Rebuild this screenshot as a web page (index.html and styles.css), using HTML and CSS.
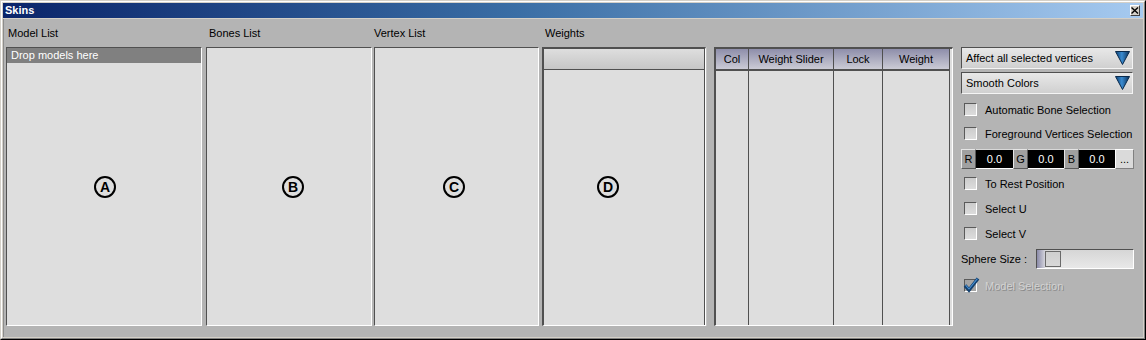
FILE: index.html
```html
<!DOCTYPE html>
<html>
<head>
<meta charset="utf-8">
<title>Skins</title>
<link rel="stylesheet" href="styles.css">
</head>
<body>
<div class="win">
  <div class="frame">
    <div class="titlebar">
      <span class="title">Skins</span>
      <span class="close"><svg width="8" height="7" viewBox="0 0 8 7"><path d="M0.5 0.5 L7 6.5 M7 0.5 L0.5 6.5" stroke="#000" stroke-width="1.4" fill="none"/></svg></span>
    </div>
    <div class="main">
      <div class="col col-a">
        <div class="lbl lbl-a">Model List</div>
        <div class="panel">
          <div class="drop">Drop models here</div>
          <span class="mark mark-a">A</span>
        </div>
      </div>
      <div class="col col-b">
        <div class="lbl lbl-b">Bones List</div>
        <div class="panel">
          <span class="mark mark-b">B</span>
        </div>
      </div>
      <div class="col col-c">
        <div class="lbl lbl-c">Vertex List</div>
        <div class="panel">
          <span class="mark mark-c">C</span>
        </div>
      </div>
      <div class="col col-w">
        <div class="lbl lbl-w">Weights</div>
        <div class="wrow">
          <div class="panel panel-d">
            <div class="dhead"></div>
            <span class="mark mark-d">D</span>
          </div>
          <div class="splitter"></div>
          <div class="table">
            <div class="tcol tc-col"><div class="th">Col</div><div class="td"></div></div>
            <div class="tcol tc-slider"><div class="th">Weight Slider</div><div class="td"></div></div>
            <div class="tcol tc-lock"><div class="th">Lock</div><div class="td"></div></div>
            <div class="tcol tc-weight"><div class="th">Weight</div><div class="td"></div></div>
            <div class="tfill"></div>
          </div>
        </div>
      </div>
      <div class="side">
        <div class="dd dd1"><span>Affect all selected vertices</span>
          <svg class="arrow" width="15" height="14" viewBox="0 0 15 14"><defs><linearGradient id="ag" x1="0" y1="0" x2="1" y2="0"><stop offset="0" stop-color="#0c3f72"/><stop offset="0.45" stop-color="#3a8bd0"/><stop offset="1" stop-color="#0a2f58"/></linearGradient></defs><polygon points="0.5,0.5 14.5,0.5 7.5,13.5" fill="url(#ag)" stroke="#0a2a4c" stroke-width="1"/></svg>
        </div>
        <div class="dd dd2"><span>Smooth Colors</span>
          <svg class="arrow" width="15" height="14" viewBox="0 0 15 14"><defs><linearGradient id="ag2" x1="0" y1="0" x2="1" y2="0"><stop offset="0" stop-color="#0c3f72"/><stop offset="0.45" stop-color="#3a8bd0"/><stop offset="1" stop-color="#0a2f58"/></linearGradient></defs><polygon points="0.5,0.5 14.5,0.5 7.5,13.5" fill="url(#ag2)" stroke="#0a2a4c" stroke-width="1"/></svg>
        </div>
        <div class="cbrow cb1"><span class="cb"></span><span class="cbl">Automatic Bone Selection</span></div>
        <div class="cbrow cb2"><span class="cb"></span><span class="cbl">Foreground Vertices Selection</span></div>
        <div class="rgb">
          <span class="ch ch-r">R</span><span class="val v1">0.0</span>
          <span class="ch ch-g">G</span><span class="val v2">0.0</span>
          <span class="ch ch-b">B</span><span class="val v3">0.0</span>
          <span class="more">...</span>
        </div>
        <div class="cbrow cb3"><span class="cb"></span><span class="cbl">To Rest Position</span></div>
        <div class="cbrow cb4"><span class="cb"></span><span class="cbl">Select U</span></div>
        <div class="cbrow cb5"><span class="cb"></span><span class="cbl">Select V</span></div>
        <div class="sphere">
          <span class="sph-lbl">Sphere Size :</span>
          <div class="slider"><div class="sfill"></div><div class="thumb"></div></div>
        </div>
        <div class="cbrow cb6">
          <span class="cb cb-dis">
            <svg class="check" width="17" height="16" viewBox="0 0 17 16"><path d="M2 8.5 L6 13 L15 1.5" stroke="#123f6e" stroke-width="3.4" fill="none" stroke-linejoin="miter"/><path d="M2.6 8.2 L6 12 L14.4 1.6" stroke="#4a92d4" stroke-width="1.1" fill="none"/></svg>
          </span>
          <span class="cbl dis">Model Selection</span>
        </div>
      </div>
    </div>
  </div>
</div>
</body>
</html>
```

FILE: styles.css
```css
* { box-sizing: border-box; }
html, body { margin: 0; padding: 0; }
body {
  width: 1146px;
  height: 340px;
  overflow: hidden;
  font-family: "Liberation Sans", Arial, sans-serif;
  font-size: 11px;
  color: #000;
  background: #d4d0c8;
}
.win {
  width: 1146px;
  height: 340px;
  border: 1px solid;
  border-color: #d4d0c8 #000 #000 #d4d0c8;
  display: flex;
  flex-direction: column;
}
.frame {
  flex: 1;
  border: 1px solid;
  border-color: #fff #808080 #808080 #fff;
  padding: 1px;
  display: flex;
  flex-direction: column;
  background: #d4d0c8;
}
.titlebar {
  height: 15px;
  flex: none;
  background: linear-gradient(to right, #0a246a 0%, #3a6ea5 45%, #a6caf0 100%);
  display: flex;
  align-items: center;
  justify-content: space-between;
  padding: 0 3px 0 2px;
}
.title {
  color: #fff;
  font-weight: bold;
  font-size: 11px;
  line-height: 13px;
}
.close {
  width: 10px;
  height: 11px;
  background: #d4d0c8;
  border: 1px solid;
  border-color: #fff #404040 #404040 #fff;
  display: flex;
  align-items: center;
  justify-content: center;
}
.close svg { display: block; }
.main {
  flex: 1;
  margin-top: 1px;
  background: #b4b4b4;
  border-left: 1px solid #8c8c8c;
  padding: 7px 0 0 2px;
  display: flex;
  align-items: flex-start;
}
.col { display: flex; flex-direction: column; flex: none; }
.col-a { width: 196px; margin-right: 4px; }
.col-b { width: 166px; margin-right: 2px; }
.col-c { width: 165px; margin-right: 3px; }
.col-w { width: 411px; margin-right: 8px; }
.lbl {
  height: 14px;
  line-height: 14px;
  margin-bottom: 7px;
  white-space: nowrap;
}
.lbl-a { padding-left: 2px; }
.lbl-b { padding-left: 3px; }
.lbl-c { padding-left: 0; }
.lbl-w { padding-left: 3px; }
.panel {
  position: relative;
  height: 279px;
  background: #dedede;
  border-top: 1px solid #505050;
  border-left: 1px solid #505050;
  border-right: 1px solid #fff;
  border-bottom: 1px solid #fff;
}
.drop {
  height: 15px;
  line-height: 15px;
  background: #808080;
  color: #fff;
  padding-left: 4px;
}
.mark {
  position: absolute;
  width: 22px;
  height: 22px;
  border: 2px solid #000;
  border-radius: 50%;
  font-weight: bold;
  font-size: 14px;
  line-height: 18px;
  text-align: center;
}
.mark-a { left: 87px; top: 128px; }
.mark-b { left: 75px; top: 128px; }
.mark-c { left: 68px; top: 128px; }
.mark-d { left: 53px; top: 127px; }
.wrow { display: flex; }
.panel-d {
  width: 164px;
  border-top-width: 2px;
  border-left-width: 2px;
  box-shadow: inset -1px 0 0 #505050;
}
.dhead {
  height: 21px;
  margin-right: 1px;
  background: linear-gradient(to bottom, #dedede, #c6c6c6);
  border-bottom: 1px solid #505050;
}
.splitter {
  width: 8px;
  flex: none;
  border-left: 1px solid #c4c4c4;
}
.table {
  width: 239px;
  height: 279px;
  flex: none;
  display: flex;
  background: #dedede;
  border-top: 2px solid #505050;
  border-left: 2px solid #505050;
  border-right: 1px solid #fff;
  border-bottom: 1px solid #fff;
}
.tcol {
  display: flex;
  flex-direction: column;
  border-right: 1px solid #505050;
  flex: none;
}
.tc-col { width: 33px; }
.tc-slider { width: 85px; }
.tc-lock { width: 49px; }
.tc-weight { width: 67px; }
.th {
  height: 22px;
  line-height: 20px;
  text-align: center;
  white-space: nowrap;
  background: linear-gradient(to bottom, #8e8eaa, #cbcbd5);
  border-bottom: 2px solid #505050;
}
.td { flex: 1; }
.tfill { width: 2px; flex: none; }
.side {
  width: 173px;
  flex: none;
  padding-top: 21px;
  display: flex;
  flex-direction: column;
}
.dd {
  width: 172px;
  height: 22px;
  display: flex;
  align-items: center;
  justify-content: space-between;
  padding: 0 2px 0 4px;
  background: linear-gradient(to bottom, #e8e8e8, #d0d0d0);
  border-top: 1px solid #505050;
  border-left: 1px solid #505050;
  border-right: 1px solid #f4f4f4;
  border-bottom: 1px solid #f4f4f4;
  white-space: nowrap;
}
.dd2 { margin-top: 3px; }
.arrow { display: block; }
.cbrow {
  height: 13px;
  display: flex;
  align-items: center;
  white-space: nowrap;
}
.cb {
  width: 13px;
  height: 13px;
  margin-left: 3px;
  flex: none;
  position: relative;
  background: linear-gradient(to bottom, #cccccc, #dcdcdc);
  border-top: 1px solid #5a5a5a;
  border-left: 1px solid #5a5a5a;
  border-right: 1px solid #fff;
  border-bottom: 1px solid #fff;
}
.cbl { margin-left: 8px; }
.cb1 { margin-top: 9px; }
.cb2 { margin-top: 11px; }
.cb3 { margin-top: 8px; }
.cb4 { margin-top: 12px; }
.cb5 { margin-top: 12px; }
.cb6 { margin-top: 10px; }
.cb-dis { background: #a4a4a4; }
.check { position: absolute; left: -2px; top: -3px; }
.dis {
  color: #d2d2d2;
  text-shadow: 1px 1px 0 #8a8a8a;
}
.rgb {
  margin-top: 9px;
  height: 20px;
  display: flex;
}
.ch {
  width: 15px;
  flex: none;
  background: #a0a0a0;
  border: 1px solid;
  border-color: #e6e6e6 #5a5a5a #5a5a5a #e6e6e6;
  text-align: center;
  line-height: 18px;
}
.val {
  flex: none;
  background: #000;
  color: #fff;
  text-align: center;
  line-height: 18px;
  border-top: 1px solid #d8d8d8;
  border-bottom: 1px solid #fff;
}
.v1 { width: 37px; }
.v2 { width: 36px; }
.v3 { width: 36px; }
.more {
  width: 19px;
  flex: none;
  background: #dadada;
  border: 1px solid;
  border-color: #fff #808080 #808080 #fff;
  text-align: center;
  line-height: 19px;
}
.sphere {
  margin-top: 9px;
  height: 20px;
  display: flex;
  align-items: center;
}
.sph-lbl { width: 75px; flex: none; white-space: nowrap; }
.slider {
  width: 98px;
  height: 20px;
  flex: none;
  display: flex;
  align-items: center;
  background: linear-gradient(to bottom, #d6d6d6, #e8e8e8);
  border-top: 1px solid #505050;
  border-left: 1px solid #505050;
  border-right: 1px solid #fff;
  border-bottom: 1px solid #fff;
}
.sfill {
  width: 8px;
  height: 100%;
  background: linear-gradient(to right, #8a8aa8, #d4d4dc);
}
.thumb {
  width: 16px;
  height: 16px;
  background: linear-gradient(to bottom, #cfcfcf, #d8d8d8);
  border: 1px solid #6a6a6a;
}
```
